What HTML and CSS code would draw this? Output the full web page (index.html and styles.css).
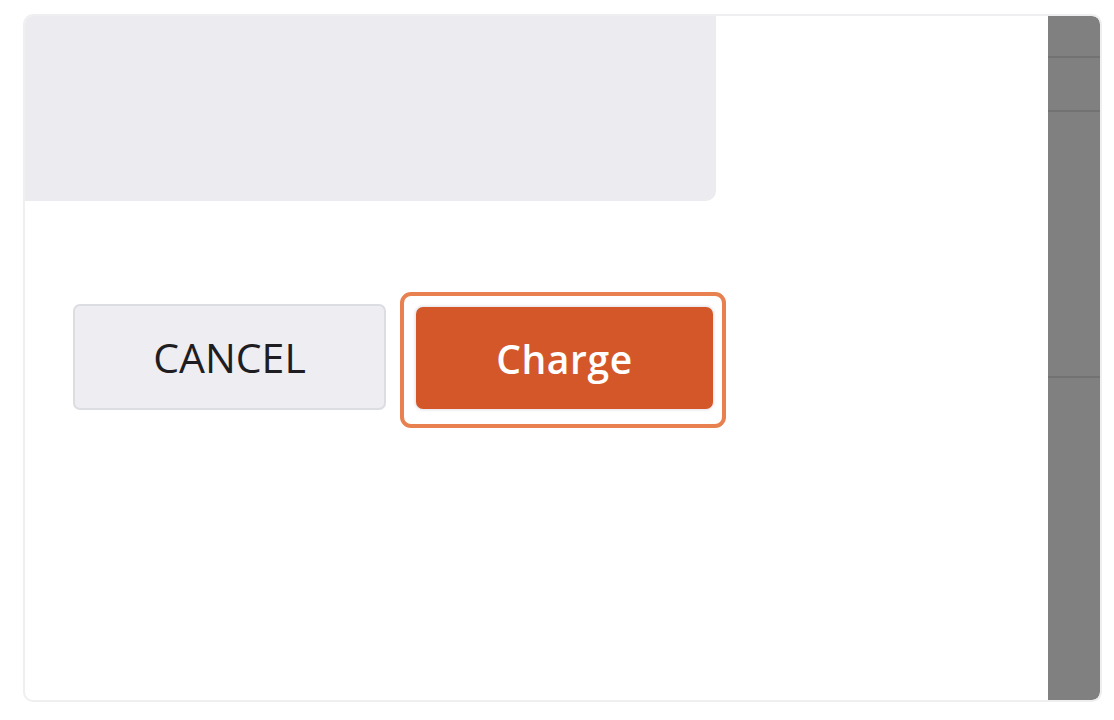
FILE: index.html
```html
<!DOCTYPE html>
<html>
<head>
<meta charset="utf-8">
<link rel="stylesheet" href="styles.css">
</head>
<body>
<div class="card">
  <div class="main">
    <div class="panel"></div>
    <div class="actions">
      <button class="btn btn-cancel">CANCEL</button>
      <div class="focus-ring">
        <button class="btn btn-charge">Charge</button>
      </div>
    </div>
  </div>
  <div class="side">
    <div class="row r1"></div>
    <div class="row r2"></div>
    <div class="row r3"></div>
    <div class="row r4"></div>
  </div>
</div>
</body>
</html>
```
FILE: styles.css
```css
html, body {
  margin: 0;
  padding: 0;
  background: #ffffff;
}
body {
  font-family: "Open Sans", "Noto Sans", sans-serif;
  padding: 14px 12px 0 23px;
}
.card {
  width: 1079px;
  height: 688px;
  box-sizing: border-box;
  border: 2px solid #efeff2;
  border-radius: 10px;
  overflow: hidden;
  display: flex;
  background: #fff;
}
.main {
  flex: 1;
  display: flex;
  flex-direction: column;
}
.panel {
  width: 691px;
  height: 185px;
  background: #ececf0;
  border-bottom-right-radius: 10px;
}
.actions {
  display: flex;
  align-items: flex-start;
  padding: 91px 0 0 48px;
}
.btn {
  font-family: "Open Sans", "Noto Sans", sans-serif;
  cursor: pointer;
  box-sizing: border-box;
  margin: 0;
  padding: 0;
}
.btn-cancel {
  margin-top: 12px;
  margin-right: 14px;
  width: 313px;
  height: 106px;
  background: #ededf2;
  border: 2px solid #dcdce3;
  border-radius: 7px;
  color: #1e1e22;
  font-size: 41px;
  font-weight: 400;
}
.focus-ring {
  border: 4px solid #e8804f;
  border-radius: 11px;
  padding: 11px 9px 15px 12px;
  display: flex;
}
.btn-charge {
  width: 297px;
  height: 102px;
  background: #d4572a;
  border: none;
  border-radius: 7px;
  color: #ffffff;
  font-size: 39px;
  font-weight: 600;
  letter-spacing: 0.6px;
  box-shadow: 0 0 3px 1px rgba(90, 90, 120, 0.18);
}
.side {
  width: 52px;
  background: #808080;
  display: flex;
  flex-direction: column;
  border-top-right-radius: 8px;
  border-bottom-right-radius: 8px;
}
.row {
  border-bottom: 2px solid #727272;
}
.r1 { height: 40px; }
.r2 { height: 52px; }
.r3 { height: 264px; }
.r4 { flex: 1; border-bottom: none; }
```
